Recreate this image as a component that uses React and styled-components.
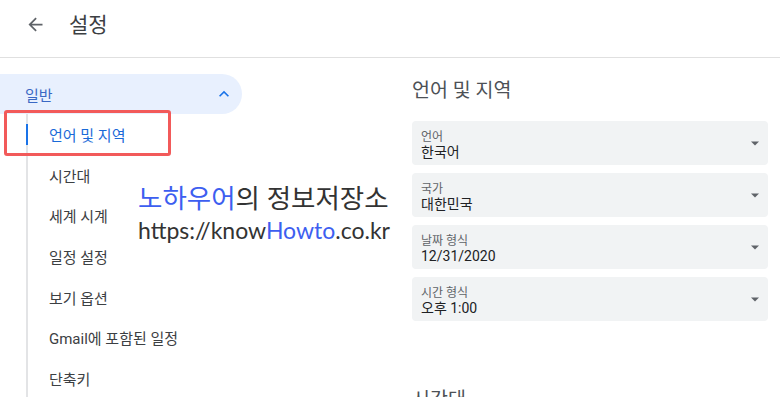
import React from "react";
import styled, { createGlobalStyle } from "styled-components";

const Global = createGlobalStyle`
  html, body { margin: 0; padding: 0; background: #fff; }
  body {
    font-family: Roboto, "Noto Sans CJK KR", "Noto Sans", sans-serif;
    overflow: hidden;
  }
  * { box-sizing: border-box; }
`;

const Page = styled.div`
  position: relative;
  width: 780px;
  height: 397px;
  overflow: hidden;
  background: #fff;
`;

const Header = styled.header`
  height: 58px;
  border-bottom: 1px solid #e0e0e0;
  display: flex;
  align-items: center;
  padding: 0 0 8px 24px;
  gap: 23px;
`;

const IconButton = styled.span`
  width: 22px;
  height: 22px;
  display: flex;
  align-items: center;
  justify-content: center;
  color: #5f6368;
`;

const Title = styled.h1`
  margin: 0;
  font-size: 21px;
  font-weight: 400;
  color: #3c4043;
  line-height: 28px;
`;

const Body = styled.div`
  display: grid;
  grid-template-columns: 242px 1fr;
`;

const Sidebar = styled.nav`
  padding-top: 16px;
`;

const GroupHeader = styled.div`
  height: 40px;
  background: #e8f0fe;
  border-radius: 0 20px 20px 0;
  display: flex;
  align-items: center;
  justify-content: space-between;
  padding: 0 8px 0 25px;
  font-size: 15px;
  color: #3a68c4;
`;

const NavList = styled.ul`
  list-style: none;
  margin: 0 0 0 26px;
  padding: 0;
  border-left: 2px solid #e3e4e6;
`;

const NavItem = styled.li`
  position: relative;
  height: 40.7px;
  display: flex;
  align-items: center;
  padding-left: 21px;
  font-size: 15px;
  color: ${(p) => (p.$active ? "#1a6ad8" : "#3c4043")};
  &::before {
    content: "";
    display: ${(p) => (p.$active ? "block" : "none")};
    position: absolute;
    left: -2px;
    top: 10px;
    width: 2px;
    height: 21px;
    background: #1a73e8;
  }
`;

const Content = styled.main`
  padding: 20px 12px 0 170px;
`;

const SectionTitle = styled.h2`
  margin: ${(p) => (p.$first ? "0" : "66px")} 0 18px;
  font-size: 19.5px;
  line-height: 25px;
  font-weight: 400;
  color: #4d5156;
`;

const Fields = styled.div`
  display: flex;
  flex-direction: column;
  gap: 8px;
`;

const Select = styled.div`
  height: 44px;
  background: #f1f3f4;
  border-radius: 4px;
  display: flex;
  align-items: center;
  justify-content: space-between;
  padding: 0 8px 0 9px;
`;

const SelectText = styled.div`
  display: flex;
  flex-direction: column;
  padding-top: 5px;
`;

const SelectLabel = styled.span`
  font-size: 12px;
  line-height: 14px;
  color: #5f6368;
`;

const SelectValue = styled.span`
  font-size: 14px;
  line-height: 17px;
  font-weight: 400;
  color: #202124;
`;

const Annotation = styled.div`
  position: absolute;
  left: 4px;
  top: 110px;
  width: 167px;
  height: 46px;
  border: 3px solid #f25a5a;
  border-radius: 3px;
  pointer-events: none;
`;

const Watermark = styled.div`
  position: absolute;
  left: 138px;
  top: 181px;
  color: #333;
  pointer-events: none;
`;

const WatermarkLine = styled.div`
  font-family: Lato, "Noto Sans CJK KR", sans-serif;
  font-size: ${(p) => p.$size}px;
  line-height: ${(p) => p.$lh}px;
  white-space: nowrap;
`;

const Accent = styled.span`
  color: #3d5ef0;
`;

const BackArrow = () => (
  <svg width="21" height="21" viewBox="0 0 24 24" fill="currentColor">
    <path d="M20 11H7.83l5.59-5.59L12 4l-8 8 8 8 1.41-1.41L7.83 13H20v-2z" />
  </svg>
);

const ChevronUp = () => (
  <svg width="20" height="20" viewBox="0 0 24 24" fill="#1a73e8">
    <path d="M12 8l-6 6 1.41 1.41L12 10.83l4.59 4.58L18 14z" />
  </svg>
);

const DropArrow = () => (
  <svg width="10" height="10" viewBox="0 0 10 10" fill="#5f6368">
    <path d="M1 3.5h8L5 7.5z" />
  </svg>
);

const navItems = [
  "언어 및 지역",
  "시간대",
  "세계 시계",
  "일정 설정",
  "보기 옵션",
  "Gmail에 포함된 일정",
  "단축키",
];

const fields = [
  { label: "언어", value: "한국어" },
  { label: "국가", value: "대한민국" },
  { label: "날짜 형식", value: "12/31/2020" },
  { label: "시간 형식", value: "오후 1:00" },
];

export default function App() {
  return (
    <Page>
      <Global />
      <Header>
        <IconButton>
          <BackArrow />
        </IconButton>
        <Title>설정</Title>
      </Header>
      <Body>
        <Sidebar>
          <GroupHeader>
            <span>일반</span>
            <ChevronUp />
          </GroupHeader>
          <NavList>
            {navItems.map((t, i) => (
              <NavItem key={t} $active={i === 0}>
                {t}
              </NavItem>
            ))}
          </NavList>
        </Sidebar>
        <Content>
          <SectionTitle $first>언어 및 지역</SectionTitle>
          <Fields>
            {fields.map((f) => (
              <Select key={f.label}>
                <SelectText>
                  <SelectLabel>{f.label}</SelectLabel>
                  <SelectValue>{f.value}</SelectValue>
                </SelectText>
                <DropArrow />
              </Select>
            ))}
          </Fields>
          <SectionTitle>시간대</SectionTitle>
        </Content>
      </Body>
      <Annotation />
      <Watermark>
        <WatermarkLine $size={26.5} $lh={35}>
          <Accent>노하우어</Accent>의 정보저장소
        </WatermarkLine>
        <WatermarkLine $size={23} $lh={28}>
          https://know<Accent>Howto</Accent>.co.kr
        </WatermarkLine>
      </Watermark>
    </Page>
  );
}
